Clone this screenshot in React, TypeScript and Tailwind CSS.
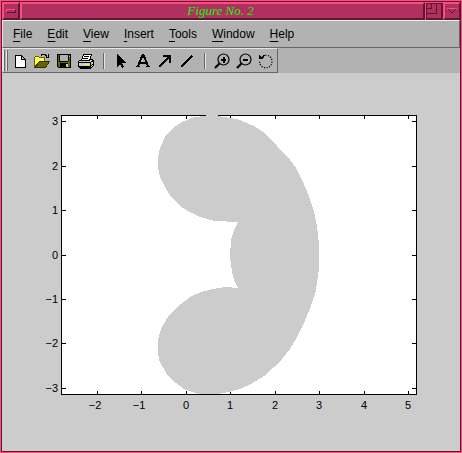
import type { ReactNode } from "react";

const menus = ["File", "Edit", "View", "Insert", "Tools", "Window", "Help"];

const xTicks = [
  { x: 97, label: "−2" },
  { x: 141, label: "−1" },
  { x: 186, label: "0" },
  { x: 230, label: "1" },
  { x: 275, label: "2" },
  { x: 319, label: "3" },
  { x: 364, label: "4" },
  { x: 408, label: "5" },
];

const yTicks = [
  { y: 121, label: "3" },
  { y: 166, label: "2" },
  { y: 210, label: "1" },
  { y: 255, label: "0" },
  { y: 299, label: "−1" },
  { y: 343, label: "−2" },
  { y: 388, label: "−3" },
];

const surface =
  "206,116 206,115 218,115 218,116 230,118 240,120 254,126 266,134 277,146 290,160 296,168 303,182 309,196 314,211 317,226 319,244 319,268 316,290 311,306 304,323 296,339 290,349 282,359 274,367 264,376 251,384 240,389 229,392 218,394 199,394 189,391 184,389 172,380 166,373 159,360 158,352 158,340 160,332 163,325 170,314 176,308 190,297 201,292 213,289 225,287 238,288 234,280 232,272 230,257 231,240 234,230 238,222 215,221 200,217 190,212 180,206 172,198 166,189 160,177 158,168 158,157 160,148 166,135 173,128 182,122 194,117";

function Icon({ children }: { children: ReactNode }) {
  return (
    <svg width="18" height="18" viewBox="0 0 18 18" shapeRendering="crispEdges" fill="none" stroke="#000" aria-hidden="true">
      {children}
    </svg>
  );
}

function Tool({ label, children }: { label: string; children: ReactNode }) {
  return (
    <button type="button" aria-label={label} className="flex w-[22px] items-center justify-center">
      <Icon>{children}</Icon>
    </button>
  );
}

function Divider() {
  return (
    <div className="flex w-[13px] justify-center">
      <div className="h-4 w-0.5 border-l border-l-[#666] bg-[#e5e5e5]" />
    </div>
  );
}

function Magnifier({ plus }: { plus?: boolean }) {
  return (
    <>
      <circle cx="10.500" cy="7.500" r="5.500" strokeWidth="1.200" shapeRendering="auto" />
      <path d="M6.500 11.500L2 16" strokeWidth="2.200" shapeRendering="auto" />
      <path d="M8 7h5v2H8z" fill="#000" stroke="none" />
      {plus && <path d="M9.500 5h2v6h-2z" fill="#000" stroke="none" />}
    </>
  );
}

function TitleBar() {
  return (
    <header className="flex h-[18px] bg-[#b03060] font-['Liberation_Serif',serif]">
      <button
        type="button"
        aria-label="Window menu"
        className="flex w-[18px] items-center justify-center border-2 border-t-[#ff4c80] border-r-[#5c1833] border-b-[#5c1833] border-l-[#ff4c80]"
      >
        <span className="h-1 w-2.5 border border-t-[#ff4c80] border-r-[#5c1833] border-b-[#5c1833] border-l-[#ff4c80]" />
      </button>
      <h1 className="flex flex-1 items-center justify-center border-2 border-t-[#ff4c80] border-r-[#5c1833] border-b-[#5c1833] border-l-[#ff4c80] pr-1 text-[13px] leading-3 text-[#00ff00] italic">
        Figure No. 2
      </h1>
      <button type="button" aria-label="Restore" className="w-[18px] border-l border-l-[#ff4c80]">
        <svg width="17" height="18" viewBox="0 0 17 18" shapeRendering="crispEdges" fill="#5c1833" aria-hidden="true">
          <path d="M0 0h17v1H0z" fill="#ff4c80" />
          <path d="M0 1h17v1H0zM0 1h1v16H0zM15 1h2v17h-2zM0 16h17v2H0zM5 2h1v5H5zM1 6h5v1H1zM10 2h1v10h-1zM1 11h10v1H1z" />
        </svg>
      </button>
      <button
        type="button"
        aria-label="Minimize"
        className="flex w-[17px] items-center justify-center border-2 border-r border-t-[#ff4c80] border-r-[#5c1833] border-b-[#5c1833] border-l-[#ff4c80]"
      >
        <svg width="12" height="8" viewBox="0 0 12 8" shapeRendering="crispEdges" fill="none" stroke="#5c1833" aria-hidden="true">
          <path d="M1.500 1.500L6 6l4.500-4.500" />
          <path d="M1 1.500h10" stroke="#ff4c80" />
        </svg>
      </button>
    </header>
  );
}

function MenuBar() {
  return (
    <nav className="flex h-7 items-center gap-[15px] border border-t-[#f2f2f2] border-r-[#666] border-b-[#666] border-l-[#e5e5e5] bg-[#b2b2b2] px-2.5 text-[12px] leading-4">
      {menus.map((name) => (
        <button key={name} type="button">
          <span className="underline decoration-1 underline-offset-[3px]">{name[0]}</span>
          {name.slice(1)}
        </button>
      ))}
    </nav>
  );
}

function ToolBar() {
  return (
    <div className="flex h-[25px] bg-[#b2b2b2]">
      <div role="toolbar" className="flex items-center border border-t-[#e5e5e5] border-r-[#666] border-b-[#666] border-l-[#e5e5e5]">
        <div className="flex h-full w-1.5 gap-px py-px">
          <div className="w-0.5 border-l border-l-[#e5e5e5] bg-[#666]" />
          <div className="w-0.5 border-l border-l-[#e5e5e5] bg-[#666]" />
        </div>
        <Tool label="New">
          <path d="M4.500 3.500h6v4h4v8h-10z" fill="#fff" />
          <path d="M10.500 3.500l4 4" />
        </Tool>
        <Tool label="Open">
          <path d="M1.500 14.500v-9l1-1h3l1 1h5v4h-5z" fill="#ffff66" stroke="#666600" />
          <path d="M1.500 15.500l5-6h10l-4 6z" fill="#666600" stroke="#333300" />
          <path d="M8 3.500l1-1h3l2 2M15.500 2v3.500h-3" />
        </Tool>
        <Tool label="Save">
          <path d="M2.500 2.500h13v13h-12l-1-1z" fill="#666600" />
          <path d="M5 3h8v6H5z" fill="#b2b2b2" stroke="none" />
          <path d="M4.500 3v6l1 .500h7l.500-.5V3" />
          <path d="M5 11h8v5H5z" fill="#000" stroke="none" />
          <path d="M11 12h2v3h-2z" fill="#ccc" stroke="none" />
          <path d="M14 4h1v1h-1z" fill="#ccc" stroke="none" />
        </Tool>
        <Tool label="Print">
          <path d="M1.500 9.500l3-2h10l2 1v5l-3 3h-10l-2-2z" fill="#ccc" />
          <path d="M4.500 8.500l2-6h8l-2 6z" fill="#fff" />
          <path d="M7 4.500h5M6 6.500h5M1.500 10.500h12v4h-12M13.500 10.500l3-2M13.500 14.500l3-3M3 15.500h11" />
          <path d="M8 12h4v1H8z" fill="#ffff00" stroke="none" />
        </Tool>
        <Divider />
        <Tool label="Select">
          <path d="M5 2l9 9h-4l2 4-2 1-2-4-3 3z" fill="#000" stroke="none" />
        </Tool>
        <Tool label="Insert text">
          <path d="M4 14L8.500 3h1L14 14M5 10.500h8" strokeWidth="2" />
          <path d="M2 14.500h4M12 14.500h4" />
        </Tool>
        <Tool label="Insert arrow">
          <path d="M3 15L14 4" strokeWidth="2" />
          <path d="M7 4h7v7" strokeWidth="2" />
        </Tool>
        <Tool label="Insert line">
          <path d="M3 15L14 4" strokeWidth="2" />
        </Tool>
        <Divider />
        <Tool label="Zoom in">
          <Magnifier plus />
        </Tool>
        <Tool label="Zoom out">
          <Magnifier />
        </Tool>
        <Tool label="Rotate">
          <path d="M6 4.500C8 2 15 3 15 9.500S8 17 5 14.500C3 13 2.500 11 2.500 8" strokeDasharray="1.200 1.400" strokeWidth="1.200" shapeRendering="auto" />
          <path d="M2 3h1v1h1v1h1V4h1V3h2v1H7v2H6v1H2z" fill="#000" stroke="none" />
        </Tool>
      </div>
    </div>
  );
}

function Plot() {
  return (
    <svg viewBox="2 73 458 378" className="block min-h-0 w-full flex-1 text-[11px]" role="img" aria-label="Surface plot">
      <g shapeRendering="crispEdges">
        <rect x="61" y="115" width="356" height="280" fill="#fff" />
        <path d="M61.500 115.500h355v279h-355z" fill="none" stroke="#000" />
        {xTicks.map(({ x }) => (
          <path key={x} d={`M${x + 0.5} 116v3M${x + 0.5} 391v3`} stroke="#000" />
        ))}
        {yTicks.map(({ y }) => (
          <path key={y} d={`M62 ${y + 0.5}h4M412 ${y + 0.5}h4`} stroke="#000" />
        ))}
        <polygon points={surface} fill="#ccc" />
      </g>
      {xTicks.map(({ x, label }) => (
        <text key={x} x={label.length > 1 ? x - 2 : x} y="409" textAnchor="middle">
          {label}
        </text>
      ))}
      {yTicks.map(({ y, label }) => (
        <text key={y} x="58" y={y + 4} textAnchor="end">
          {label}
        </text>
      ))}
    </svg>
  );
}

export default function App() {
  return (
    <div className="flex h-screen flex-col border border-[#ff4c80] bg-[#ccc] font-['Liberation_Sans',Arial,sans-serif] text-black">
      <div className="flex min-h-0 flex-1 flex-col border border-[#5c1833]">
        <TitleBar />
        <MenuBar />
        <ToolBar />
        <Plot />
      </div>
    </div>
  );
}
